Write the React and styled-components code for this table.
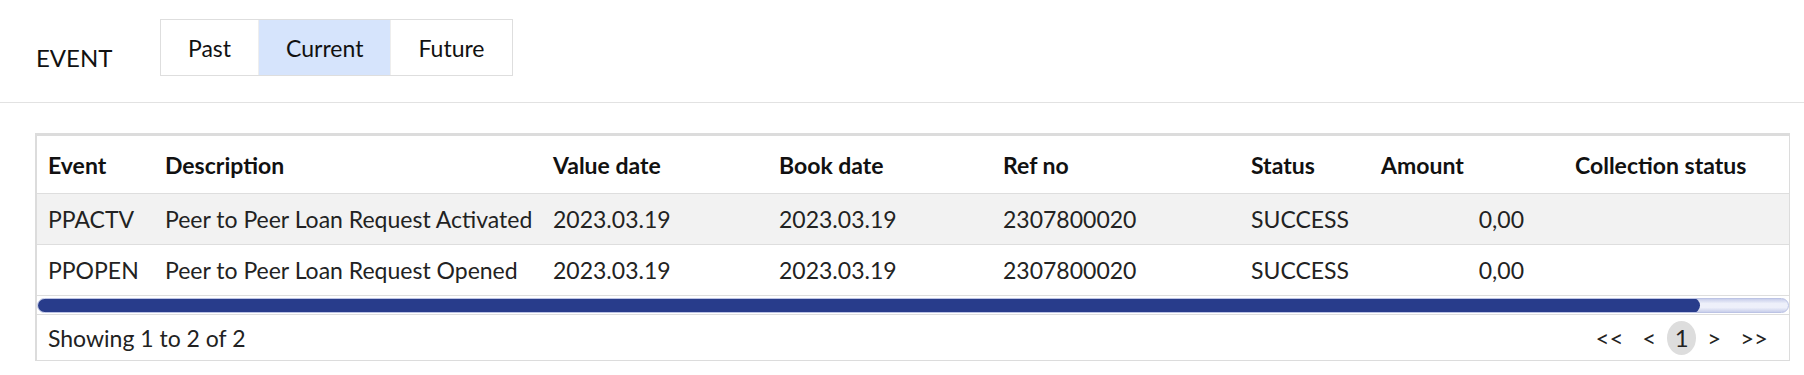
import React from 'react';
import styled, { createGlobalStyle } from 'styled-components';

const GlobalStyle = createGlobalStyle`
  body {
    margin: 0;
    background: #ffffff;
    font-family: Lato, 'Liberation Sans', sans-serif;
    color: #222222;
  }
`;

const COLUMNS = [
  { key: 'event', title: 'Event', width: 117 },
  { key: 'description', title: 'Description', width: 388 },
  { key: 'valueDate', title: 'Value date', width: 226 },
  { key: 'bookDate', title: 'Book date', width: 224 },
  { key: 'refNo', title: 'Ref no', width: 248 },
  { key: 'status', title: 'Status', width: 130 },
  { key: 'amount', title: 'Amount', width: 194, numeric: true },
  { key: 'collection', title: 'Collection status' },
];

const ROWS = [
  {
    event: 'PPACTV',
    description: 'Peer to Peer Loan Request Activated',
    valueDate: '2023.03.19',
    bookDate: '2023.03.19',
    refNo: '2307800020',
    status: 'SUCCESS',
    amount: '0,00',
    collection: '',
  },
  {
    event: 'PPOPEN',
    description: 'Peer to Peer Loan Request Opened',
    valueDate: '2023.03.19',
    bookDate: '2023.03.19',
    refNo: '2307800020',
    status: 'SUCCESS',
    amount: '0,00',
    collection: '',
  },
];

const TABS = ['Past', 'Current', 'Future'];

function App() {
  const [tab, setTab] = React.useState('Current');

  return (
    <Page>
      <GlobalStyle />
      <TopBar>
        <Title>EVENT</Title>
        <TabGroup>
          {TABS.map((name) => (
            <TabButton
              key={name}
              $active={tab === name}
              onClick={() => setTab(name)}
            >
              {name}
            </TabButton>
          ))}
        </TabGroup>
      </TopBar>

      <Content>
        <TableBox>
          <Table>
            <colgroup>
              {COLUMNS.map((col) => (
                <col key={col.key} style={col.width ? { width: col.width } : undefined} />
              ))}
            </colgroup>
            <thead>
              <tr>
                {COLUMNS.map((col) => (
                  <TH key={col.key}>{col.title}</TH>
                ))}
              </tr>
            </thead>
            <tbody>
              {ROWS.map((row, index) => (
                <TR key={row.event} $striped={index % 2 === 0}>
                  {COLUMNS.map((col) => (
                    <TD key={col.key} $numeric={col.numeric}>
                      {row[col.key]}
                    </TD>
                  ))}
                </TR>
              ))}
            </tbody>
          </Table>

          <ScrollTrack>
            <ScrollThumb $ratio={0.95} />
          </ScrollTrack>

          <Footer>
            <span>Showing 1 to 2 of 2</span>
            <Pager>
              <PageLink>{'<<'}</PageLink>
              <PageLink>{'<'}</PageLink>
              <PageLink $current>1</PageLink>
              <PageLink>{'>'}</PageLink>
              <PageLink>{'>>'}</PageLink>
            </Pager>
          </Footer>
        </TableBox>
      </Content>
    </Page>
  );
}

export default App;

const Page = styled.div`
  width: 1804px;
  min-height: 375px;
`;

const TopBar = styled.div`
  display: flex;
  align-items: flex-start;
  padding: 19px 0 0 36px;
  box-sizing: border-box;
  height: 103px;
  border-bottom: 1px solid #e2e2e2;
`;

const Title = styled.div`
  width: 124px;
  margin-top: 24px;
  font-size: 24px;
  line-height: 30px;
  color: #111111;
`;

const TabGroup = styled.div`
  display: flex;
  border: 1px solid #dedede;
  height: 57px;
  box-sizing: border-box;
`;

const TabButton = styled.button`
  font-family: inherit;
  font-size: 23px;
  color: #111111;
  padding: 0 27px;
  border: none;
  border-right: 1px solid #eeeeee;
  background: ${(p) => (p.$active ? '#d6e4fc' : '#ffffff')};
  cursor: pointer;

  &:last-child {
    border-right: none;
  }
`;

const Content = styled.div`
  padding: 30px 14px 0 35px;
`;

const TableBox = styled.div`
  border: 1px solid #dcdcdc;
  border-top: 3px solid #dcdcdc;
  border-left: 2px solid #dcdcdc;
`;

const Table = styled.table`
  width: 100%;
  border-collapse: collapse;
  table-layout: fixed;
`;

const TH = styled.th`
  height: 57px;
  padding: 0 11px;
  text-align: left;
  font-size: 23px;
  font-weight: 700;
  color: #111111;
  white-space: nowrap;
  border-bottom: 1px solid #dedede;
`;

const TR = styled.tr`
  background: ${(p) => (p.$striped ? '#f2f2f2' : '#ffffff')};
  border-bottom: 1px solid #dedede;
`;

const TD = styled.td`
  height: 50px;
  padding: ${(p) => (p.$numeric ? '0 40px 0 11px' : '0 11px')};
  text-align: ${(p) => (p.$numeric ? 'right' : 'left')};
  font-size: 23px;
  white-space: nowrap;
`;

const ScrollTrack = styled.div`
  margin: 2px 0 1px 0;
  height: 15px;
  border-radius: 8px;
  box-sizing: border-box;
  border: 1px solid #bcc3e4;
  background: linear-gradient(
    to bottom,
    #c9cfeb 0%,
    #eef0fa 35%,
    #eef0fa 65%,
    #c9cfeb 100%
  );
  overflow: hidden;
`;

const ScrollThumb = styled.div`
  width: ${(p) => p.$ratio * 100}%;
  margin: -1px 0 0 -1px;
  height: 15px;
  border-radius: 8px;
  background: #283c8b;
`;

const Footer = styled.div`
  display: flex;
  align-items: center;
  justify-content: space-between;
  height: 45px;
  padding: 0 13px 0 11px;
  border-top: 1px solid #dedede;
  font-size: 23px;
`;

const Pager = styled.div`
  display: flex;
  align-items: center;
  gap: 3px;
`;

const PageLink = styled.span`
  display: flex;
  align-items: center;
  justify-content: center;
  height: 34px;
  min-width: ${(p) => (p.$current ? '29px' : 'auto')};
  padding: 0 ${(p) => (p.$current ? '0' : '8px')};
  border-radius: 50%;
  background: ${(p) => (p.$current ? '#dddddd' : 'transparent')};
  color: #222222;
  font-size: 24px;
  cursor: pointer;
`;
